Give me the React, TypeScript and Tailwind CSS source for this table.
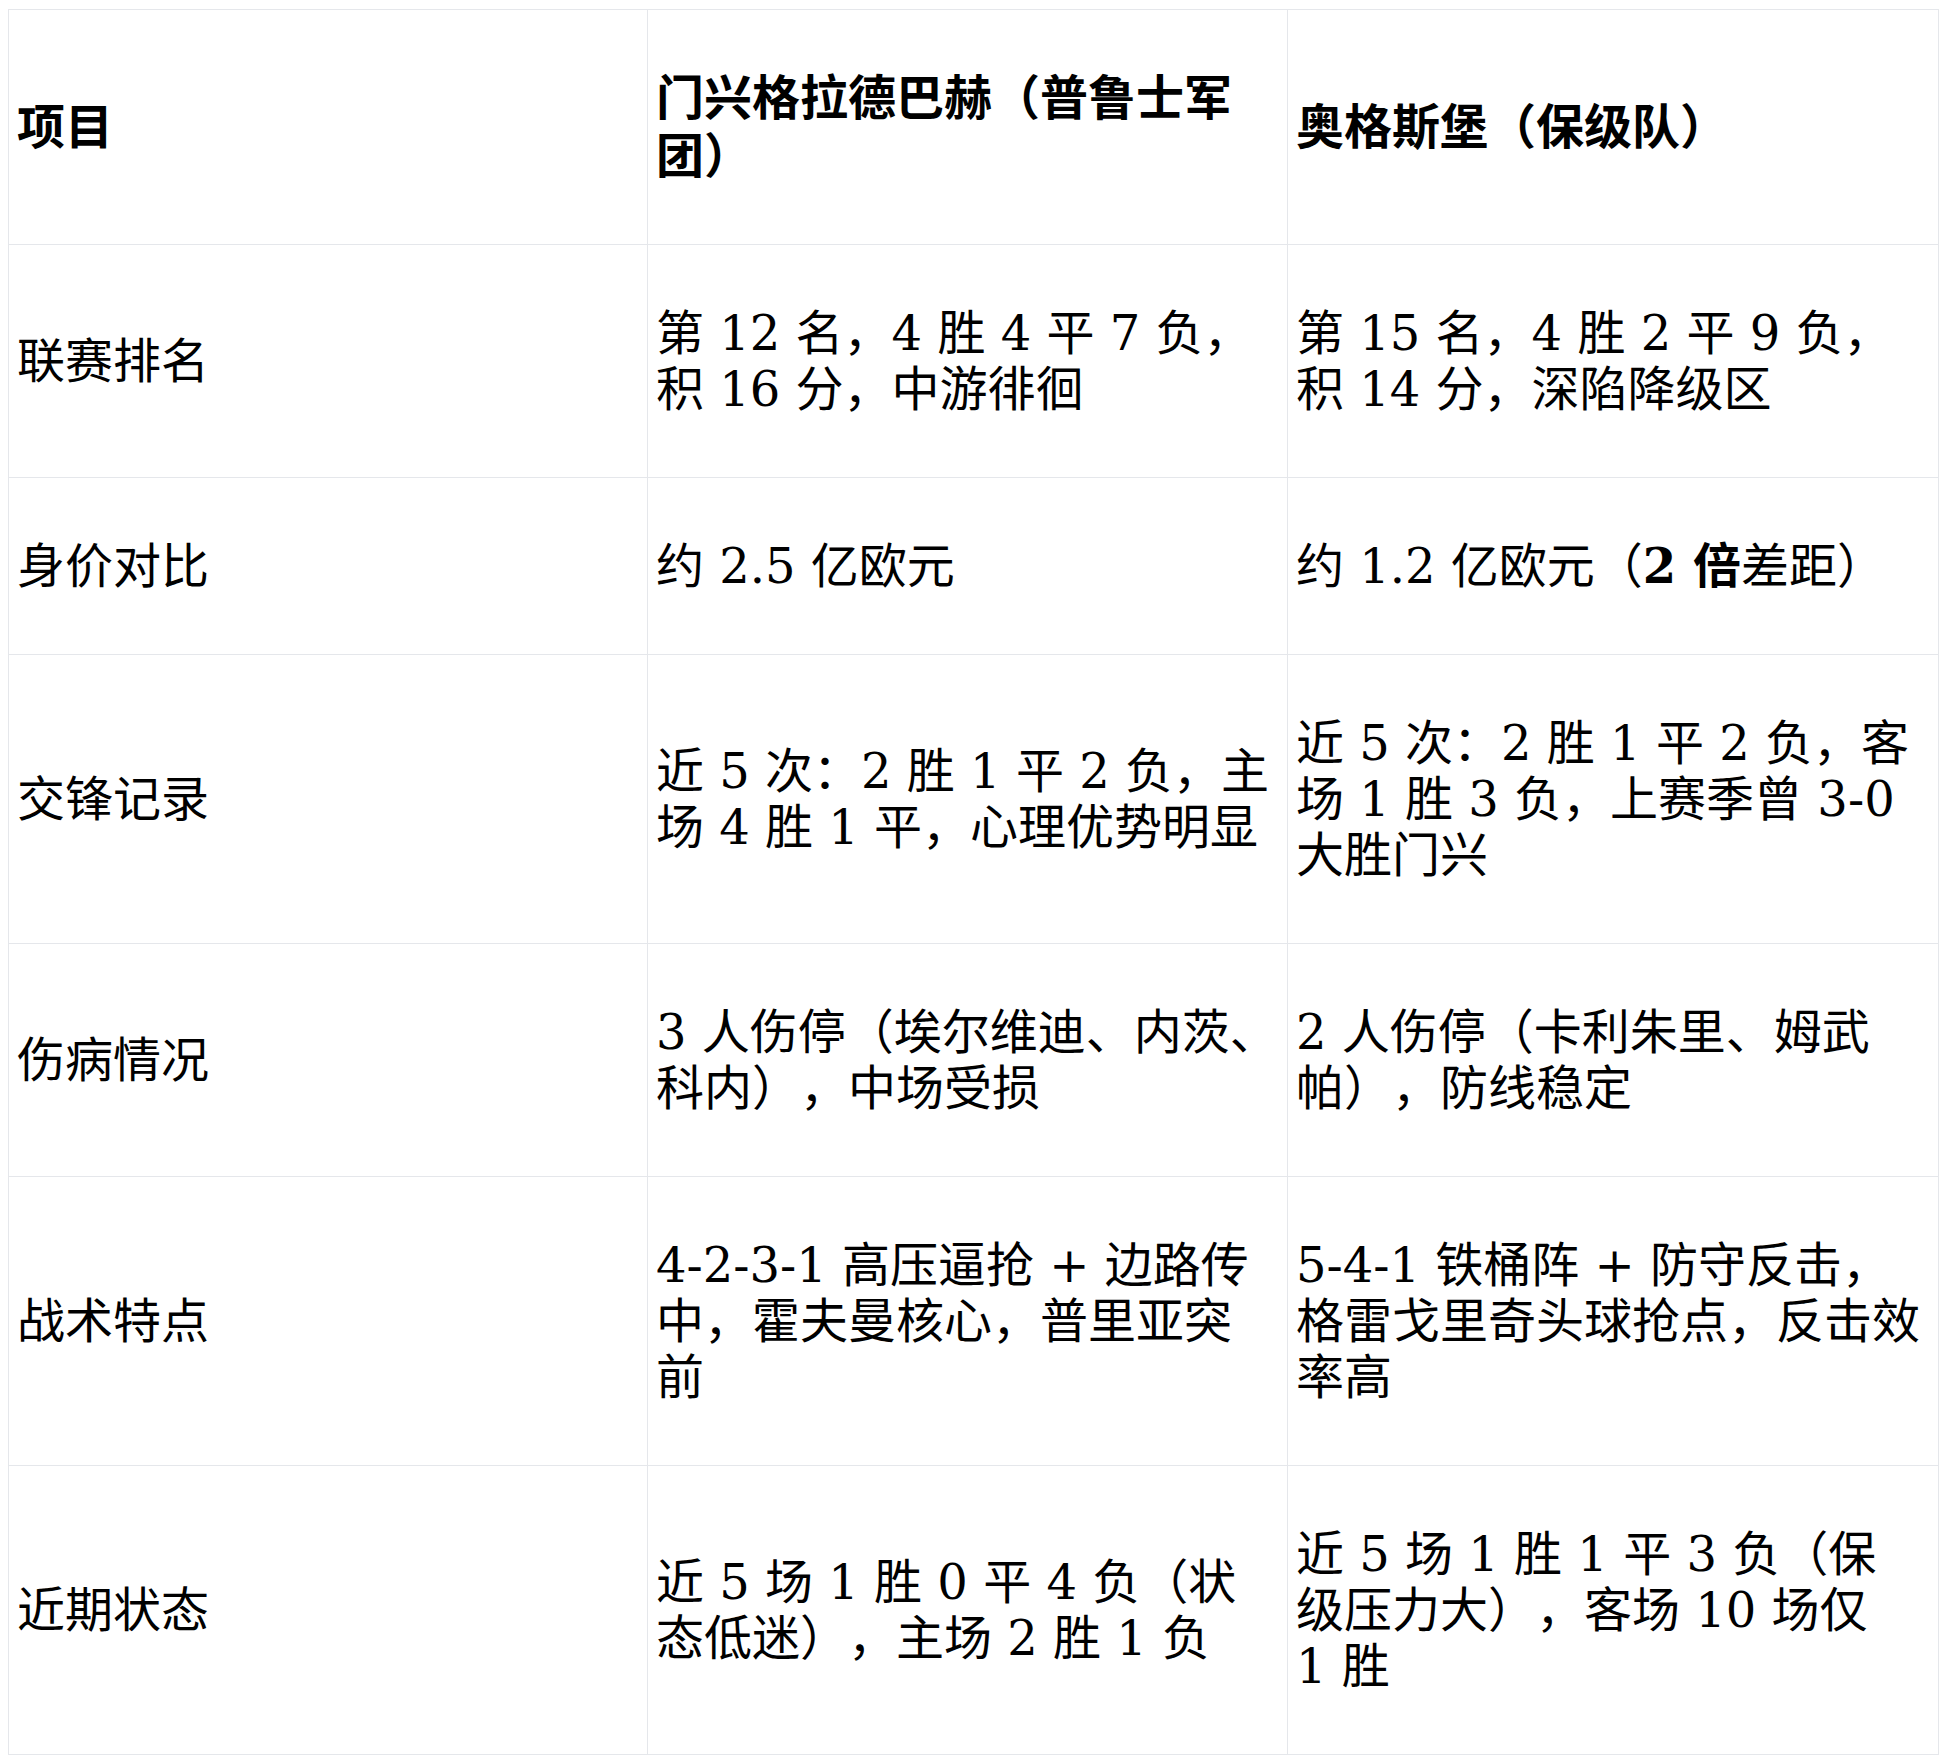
const rows: { label: string; a: React.ReactNode; b: React.ReactNode }[] = [
  {
    label: '联赛排名',
    a: '第 12 名，4 胜 4 平 7 负，积 16 分，中游徘徊',
    b: '第 15 名，4 胜 2 平 9 负，积 14 分，深陷降级区',
  },
  {
    label: '身价对比',
    a: '约 2.5 亿欧元',
    b: (
      <>
        约 1.2 亿欧元（<strong className="font-bold">2 倍</strong>差距）
      </>
    ),
  },
  {
    label: '交锋记录',
    a: '近 5 次：2 胜 1 平 2 负，主场 4 胜 1 平，心理优势明显',
    b: '近 5 次：2 胜 1 平 2 负，客场 1 胜 3 负，上赛季曾 3-0 大胜门兴',
  },
  {
    label: '伤病情况',
    a: '3 人伤停（埃尔维迪、内茨、科内），中场受损',
    b: '2 人伤停（卡利朱里、姆武帕），防线稳定',
  },
  {
    label: '战术特点',
    a: '4-2-3-1 高压逼抢 + 边路传中，霍夫曼核心，普里亚突前',
    b: '5-4-1 铁桶阵 + 防守反击，格雷戈里奇头球抢点，反击效率高',
  },
  {
    label: '近期状态',
    a: '近 5 场 1 胜 0 平 4 负（状态低迷），主场 2 胜 1 负',
    b: (
      <>
        近 5 场 1 胜 1 平 3 负（保级压力大），客场 10 场仅 <span className="whitespace-nowrap">1 胜</span>
      </>
    ),
  },
]

export default function App() {
  const th = 'border border-[#e5e7eb] px-2 py-[59px] text-left align-middle font-bold leading-[58px]'
  const td = 'border border-[#e5e7eb] px-2 py-[60px] text-left align-middle leading-[56px]'

  return (
    <div className="min-h-screen bg-white pt-[9px] pl-2 text-black font-['DejaVu_Serif','Noto_Sans_CJK_SC',serif] text-[48px] [text-spacing-trim:space-all]">
      <table className="w-[1930px] table-fixed border-collapse">
        <colgroup>
          <col className="w-[639px]" />
          <col className="w-[640px]" />
          <col className="w-[651px]" />
        </colgroup>
        <thead>
          <tr>
            <th className={th}>项目</th>
            <th className={th}>门兴格拉德巴赫（普鲁士军团）</th>
            <th className={`${th} pr-4`}>奥格斯堡（保级队）</th>
          </tr>
        </thead>
        <tbody>
          {rows.map((r) => (
            <tr key={r.label}>
              <td className={td}>{r.label}</td>
              <td className={td}>{r.a}</td>
              <td className={`${td} pr-4`}>{r.b}</td>
            </tr>
          ))}
        </tbody>
      </table>
    </div>
  )
}
